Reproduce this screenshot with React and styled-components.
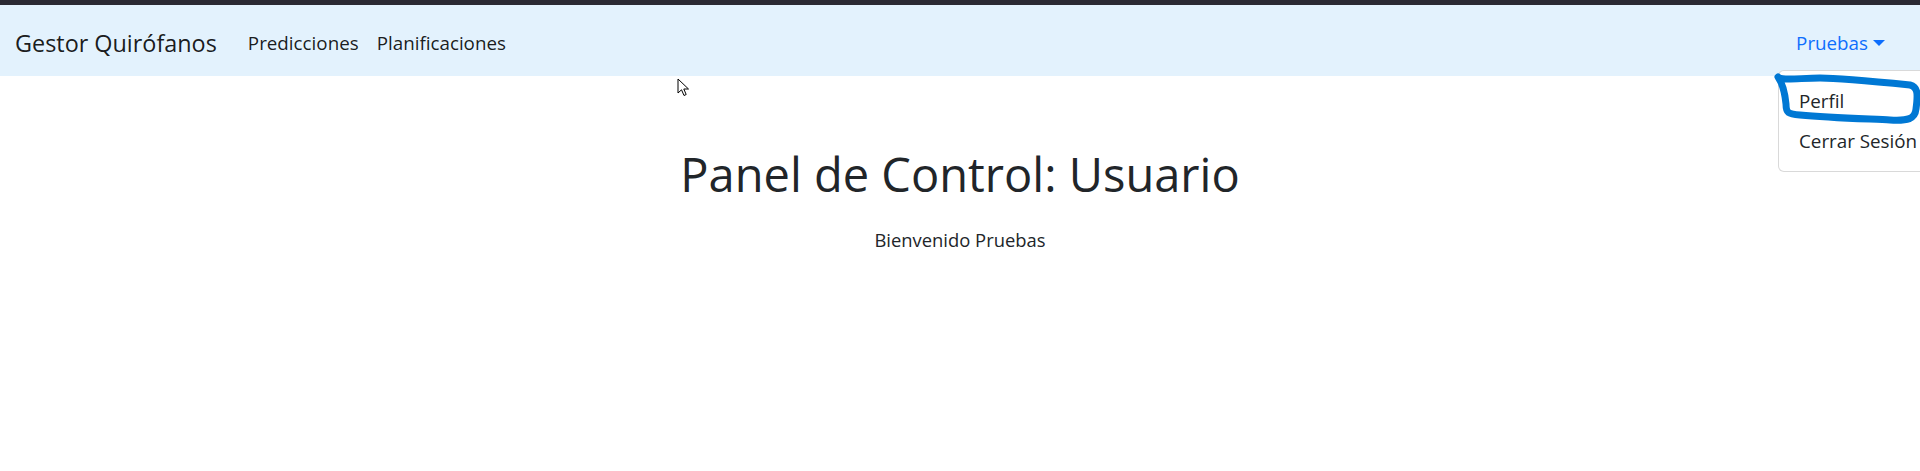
import React from "react";
import styled, { createGlobalStyle } from "styled-components";

// estilos base de la página
const GlobalStyle = createGlobalStyle`
  html, body {
    margin: 0;
    padding: 0;
    background: #ffffff;
  }

  body {
    font-family: "Open Sans", "Noto Sans", sans-serif;
    color: #212529;
    overflow: hidden;
  }
`;

// franja oscura superior del navegador
const TopStrip = styled.div`
  height: 5px;
  background: #2b2a33;
`;

// barra de navegación
const NavBar = styled.nav`
  position: relative;
  height: 71px;
  box-sizing: border-box;
  background: #e3f2fd;

  display: flex;
  align-items: center;

  padding: 4px 35px 0 15px;
`;

const Brand = styled.a`
  font-size: 23.4px;
  color: rgba(0, 0, 0, 0.9);
  margin-right: 31px;
  white-space: nowrap;
`;

const NavLinks = styled.div`
  display: flex;
  gap: 18px;
  flex: 1;
`;

const NavLink = styled.a`
  font-size: 18.8px;
  color: ${(props) => (props.$active ? "#0d6efd" : "rgba(0, 0, 0, 0.9)")};
  white-space: nowrap;
  display: flex;
  align-items: center;
`;

// triángulo del desplegable
const Caret = styled.span`
  width: 0;
  height: 0;
  margin-left: 5px;
  border-top: 6px solid #0d6efd;
  border-left: 6px solid transparent;
  border-right: 6px solid transparent;
`;

// menú desplegable
const DropMenu = styled.div`
  position: absolute;
  left: 1778px;
  top: 70px;
  width: 200px;

  background: #ffffff;
  border: 1px solid rgba(0, 0, 0, 0.15);
  border-radius: 6px;
  padding: 10px 0;
  z-index: 10;
`;

const DropItem = styled.a`
  display: block;
  height: 40px;
  line-height: 40px;
  padding: 0 20px;
  font-size: 18.8px;
  color: #212529;
  white-space: nowrap;
`;

// marca azul dibujada encima
const Scribble = styled.svg`
  position: absolute;
  left: 1770px;
  top: 64px;
  z-index: 20;
  pointer-events: none;
`;

const Cursor = styled.svg`
  position: absolute;
  left: 677px;
  top: 78px;
  z-index: 20;
`;

// contenido principal
const Main = styled.main`
  display: flex;
  flex-direction: column;
  align-items: center;
  padding-top: 70px;
`;

const Title = styled.h1`
  margin: 0;
  font-size: 47px;
  font-weight: 400;
  line-height: 1.2;
  color: #212529;
`;

const Welcome = styled.p`
  margin: 24px 0 0;
  font-size: 18.4px;
  line-height: 1.5;
`;

const App = () => {
  return (
    <>
      <GlobalStyle />
      <TopStrip />
      <NavBar>
        <Brand>Gestor Quirófanos</Brand>
        <NavLinks>
          <NavLink>Predicciones</NavLink>
          <NavLink>Planificaciones</NavLink>
        </NavLinks>
        <NavLink $active>
          Pruebas
          <Caret />
        </NavLink>
      </NavBar>
      <DropMenu>
        <DropItem>Perfil</DropItem>
        <DropItem>Cerrar Sesión</DropItem>
      </DropMenu>
      <Scribble width="150" height="64" viewBox="0 0 150 64">
        <path
          d="M8 13 C 12 17, 30 14, 50 14 S 110 18, 140 21 C 148 23, 148 30, 146 45 C 145 55, 138 57, 120 56 S 60 54, 30 51 C 18 50, 16 49, 16 40 C 15 30, 13 20, 8 13 Z"
          fill="none"
          stroke="#0078d4"
          strokeWidth="7"
          strokeLinejoin="round"
          strokeLinecap="round"
        />
      </Scribble>
      <Cursor width="14" height="20" viewBox="0 0 14 20">
        <path
          d="M1 1 L1 15 L4.5 11.8 L7 17.5 L9.2 16.5 L6.8 11 L11.5 11 Z"
          fill="#ffffff"
          stroke="#000000"
          strokeWidth="1"
          strokeLinejoin="round"
        />
      </Cursor>
      <Main>
        <Title>Panel de Control: Usuario</Title>
        <Welcome>Bienvenido Pruebas</Welcome>
      </Main>
    </>
  );
};

export default App;
